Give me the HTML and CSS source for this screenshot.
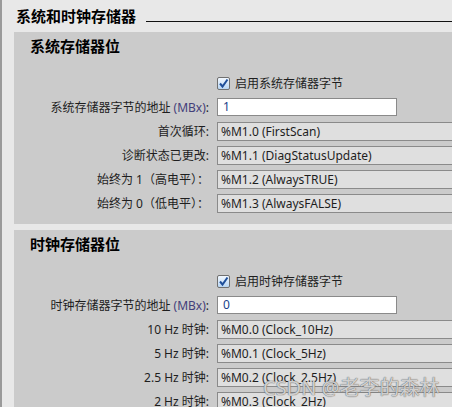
FILE: index.html
```html
<!DOCTYPE HTML>
<html>
	<head>
		<meta http-equiv="Content-Type" content="text/html; charset=utf-8">
		<title>系统和时钟存储器</title>
		<link rel="stylesheet" href="styles.css">
	</head>
	<body>
		<div class="page">
			<div class="title_row">
				<strong class="title">系统和时钟存储器</strong>
				<span class="title_line"></span>
			</div>

			<div class="panel">
				<div class="sub_title">系统存储器位</div>
				<div class="form">
					<span></span>
					<label class="check_row">
						<span class="check_box"><svg width="11" height="11" viewBox="0 0 11 11"><path d="M2 5.5 L4.5 8.5 L9.5 1.5" fill="none" stroke="#1f4f9a" stroke-width="2"/></svg></span>
						启用系统存储器字节
					</label>

					<span class="label">系统存储器字节的地址 <em>(MBx)</em>:</span>
					<span class="edit">1</span>

					<span class="label">首次循环:</span>
					<span class="read">%M1.0 (FirstScan)</span>

					<span class="label">诊断状态已更改:</span>
					<span class="read">%M1.1 (DiagStatusUpdate)</span>

					<span class="label">始终为 1（高电平）：</span>
					<span class="read">%M1.2 (AlwaysTRUE)</span>

					<span class="label">始终为 0（低电平）：</span>
					<span class="read">%M1.3 (AlwaysFALSE)</span>
				</div>
			</div>

			<div class="panel">
				<div class="sub_title">时钟存储器位</div>
				<div class="form">
					<span></span>
					<label class="check_row">
						<span class="check_box"><svg width="11" height="11" viewBox="0 0 11 11"><path d="M2 5.5 L4.5 8.5 L9.5 1.5" fill="none" stroke="#1f4f9a" stroke-width="2"/></svg></span>
						启用时钟存储器字节
					</label>

					<span class="label">时钟存储器字节的地址 <em>(MBx)</em>:</span>
					<span class="edit">0</span>

					<span class="label">10 Hz 时钟:</span>
					<span class="read">%M0.0 (Clock_10Hz)</span>

					<span class="label">5 Hz 时钟:</span>
					<span class="read">%M0.1 (Clock_5Hz)</span>

					<span class="label">2.5 Hz 时钟:</span>
					<span class="read">%M0.2 (Clock_2.5Hz)</span>

					<span class="label">2 Hz 时钟:</span>
					<span class="read">%M0.3 (Clock_2Hz)</span>
				</div>
			</div>
		</div>
		<div class="watermark">CSDN @老李的森林</div>
	</body>
</html>
```

FILE: styles.css
```css
html,body{margin:0;padding:0;height:407px;overflow:hidden;}
body{background:#e8e8e8;font-family:"Noto Sans","Noto Sans CJK SC",sans-serif;font-size:12px;color:#1e1e1e;position:relative;}
.page{border-left:2px solid #9a9a9a;height:407px;box-sizing:border-box;padding-left:12px;}

.title_row{display:flex;align-items:flex-end;padding-top:5px;margin-bottom:6px;height:21px;}
.title{font-family:"Noto Sans CJK SC",sans-serif;font-size:15px;line-height:20px;font-weight:bold;color:#000;padding-left:2px;}
.title_line{flex:1;border-top:1px solid #111;margin-left:10px;margin-bottom:4px;}

.panel{background:#cbcbcb;padding:4px 0 9px 0;margin-bottom:6px;}
.sub_title{font-family:"Noto Sans CJK SC",sans-serif;font-size:15px;line-height:20px;font-weight:bold;color:#000;padding-left:16px;margin-bottom:15px;}

.form{display:grid;grid-template-columns:195px 1fr;column-gap:8px;grid-auto-rows:24px;align-items:center;}
.label{text-align:right;white-space:nowrap;}
.label em{font-style:normal;color:#44407a;}

.check_row{display:flex;align-items:center;gap:5px;}
.check_box{width:11px;height:11px;border:1px solid #707070;border-radius:2px;background:linear-gradient(#f2f8ff,#b8d6f4);display:flex;}

.edit{width:180px;height:18px;box-sizing:border-box;background:#fff;border:1px solid #8a8a8a;padding-left:5px;line-height:16px;color:#1a3f8a;}
.read{height:19px;box-sizing:border-box;background:#dfdfdf;border:1px solid #8a8a8a;border-right:none;padding-left:3px;line-height:17px;font-size:12px;white-space:nowrap;}

.watermark{position:absolute;left:263px;top:372px;font-family:"Noto Sans","Noto Sans CJK SC",sans-serif;font-size:20px;color:rgba(255,255,255,0.7);text-shadow:0 0 1px #666,0 0 1px #666;white-space:nowrap;}
```
